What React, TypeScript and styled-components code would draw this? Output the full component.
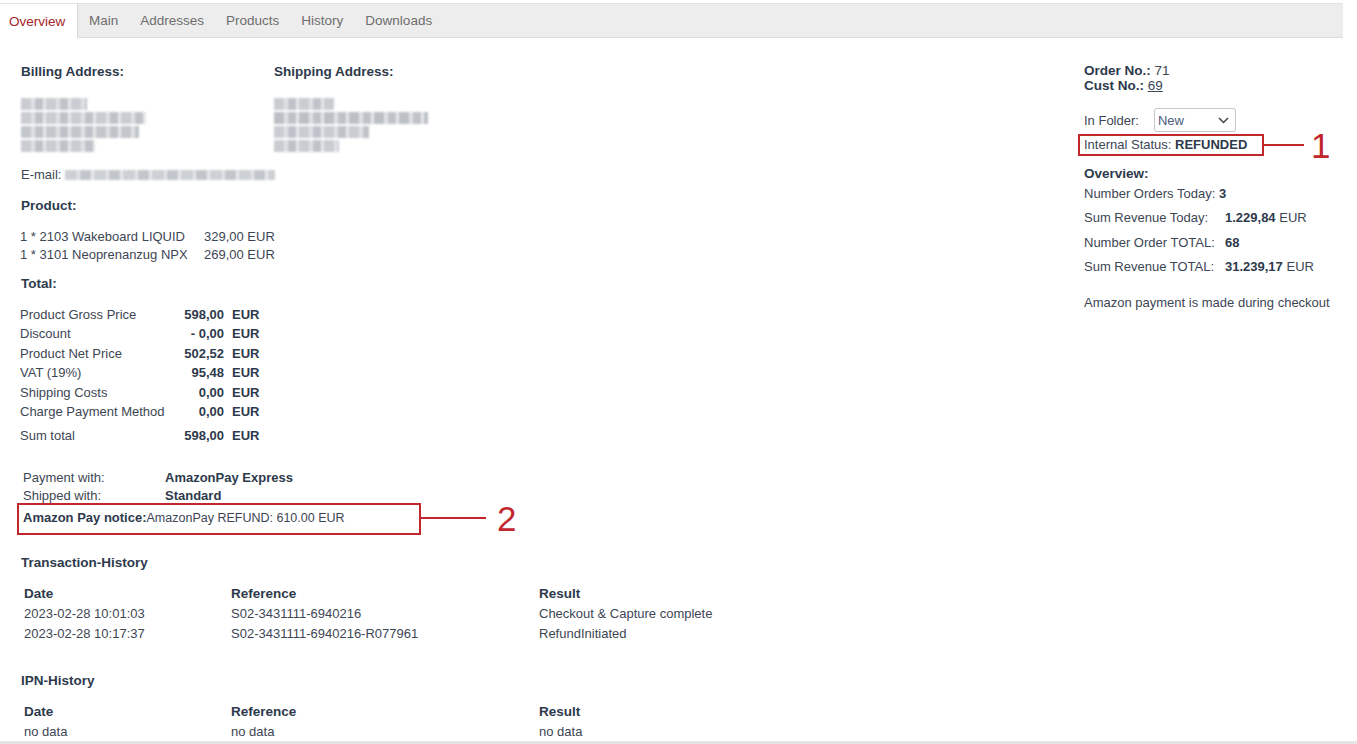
import React from "react";
import styled, { createGlobalStyle } from "styled-components";

const GlobalStyle = createGlobalStyle`
  html, body {
    margin: 0;
    padding: 0;
    background: #fff;
  }
  body {
    font-family: "Liberation Sans", Arial, sans-serif;
    font-size: 13px;
    color: #3d4654;
  }
`;

const Page = styled.div`
  position: relative;
  width: 1357px;
  height: 744px;
  overflow: hidden;
  border-bottom: 3px solid #e4e4e4;
  box-sizing: border-box;
`;

const TabBar = styled.div`
  margin-top: 3px;
  width: 1343px;
  height: 35px;
  display: flex;
  background: #ededed;
  border-top: 1px solid #e2e2e2;
  border-bottom: 1px solid #dcdcdc;
  box-sizing: border-box;
`;

const Tab = styled.div<{ $active?: boolean }>`
  padding: 0 11px 0 ${(p) => (p.$active ? "9px" : "11px")};
  display: flex;
  align-items: center;
  font-size: 13.5px;
  color: ${(p) => (p.$active ? "#a3262a" : "#6d6d6d")};
  background: ${(p) => (p.$active ? "#fff" : "transparent")};
  border-right: ${(p) => (p.$active ? "1px solid #d6d6d6" : "none")};
  margin-bottom: ${(p) => (p.$active ? "-1px" : "0")};
  ${(p) => (p.$active ? "width: 78px; box-sizing: border-box;" : "")}
`;

const Body = styled.div`
  display: flex;
  justify-content: space-between;
`;

const Left = styled.div`
  padding: 26px 0 0 21px;
  width: 800px;
`;

const Right = styled.div`
  padding: 25px 0 0 0;
  width: 273px;
`;

const Heading = styled.div<{ $mt?: number }>`
  font-weight: bold;
  color: #2e3a4c;
  font-size: 13.5px;
  margin-top: ${(p) => p.$mt ?? 0}px;
`;

const AddressRow = styled.div`
  display: flex;
`;

const AddressCol = styled.div<{ $w: number }>`
  width: ${(p) => p.$w}px;
`;

const Blur = styled.div`
  margin-top: 19px;
  display: flex;
  flex-direction: column;
  gap: 2px;
  filter: blur(1px);
`;

const BlurLine = styled.div<{ $w: number; $shade?: string }>`
  width: ${(p) => p.$w}px;
  height: 12px;
  background: repeating-linear-gradient(
    90deg,
    ${(p) => p.$shade ?? "#c9ccd1"} 0 10px,
    #dfe1e4 10px 14px,
    #bfc3c9 14px 22px,
    #e6e7ea 22px 25px
  );
`;

const EmailLine = styled.div`
  margin-top: 15px;
  display: flex;
  align-items: center;
  gap: 4px;
`;

const BlurInline = styled.span<{ $w: number }>`
  display: inline-block;
  width: ${(p) => p.$w}px;
  height: 10px;
  filter: blur(1px);
  background: repeating-linear-gradient(
    90deg,
    #cdd0d4 0 12px,
    #e4e5e8 12px 15px,
    #c2c6cb 15px 26px,
    #e8e9eb 26px 29px
  );
`;

const ProductGrid = styled.div`
  margin-top: 15px;
  display: grid;
  grid-template-columns: 184px auto;
  line-height: 18px;
  width: fit-content;
  margin-left: -1px;
`;

const TotalGrid = styled.div`
  margin-top: 15px;
  display: grid;
  grid-template-columns: 150px 54px auto;
  row-gap: 1.4px;
  width: fit-content;
  margin-left: -1px;
  line-height: 18px;
`;

const Value = styled.span<{ $last?: boolean }>`
  font-weight: bold;
  color: #2e3a4c;
  text-align: right;
  ${(p) => (p.$last ? "margin-top: 5px;" : "")}
`;

const Unit = styled.span<{ $last?: boolean }>`
  font-weight: bold;
  color: #2e3a4c;
  padding-left: 8px;
  ${(p) => (p.$last ? "margin-top: 5px;" : "")}
`;

const Label = styled.span<{ $last?: boolean }>`
  ${(p) => (p.$last ? "margin-top: 5px;" : "")}
`;

const PayGrid = styled.div`
  margin-top: 24px;
  display: grid;
  grid-template-columns: 142px auto;
  line-height: 18px;
  padding-left: 2px;
`;

const Notice = styled.div`
  margin-top: 4px;
  line-height: 18px;
  padding-left: 2px;
  font-size: 12.5px;
`;

const NoticeLabel = styled.span`
  font-weight: bold;
  color: #2e3a4c;
  font-size: 13px;
`;

const HistTable = styled.div`
  margin-top: 14px;
  display: grid;
  grid-template-columns: 207px 308px auto;
  line-height: 20px;
  padding-left: 3px;
  width: 740px;
`;

const HistHead = styled.span`
  font-weight: bold;
  color: #2e3a4c;
  font-size: 13.5px;
`;

const OrderInfo = styled.div`
  line-height: 15px;
  font-size: 13.5px;
`;

const Strong = styled.span`
  font-weight: bold;
  color: #2e3a4c;
`;

const Link = styled.a`
  color: #3d4654;
  text-decoration: underline;
`;

const FolderRow = styled.div`
  margin-top: 15px;
  display: flex;
  align-items: center;
  gap: 15px;
`;

const Select = styled.div`
  width: 82px;
  height: 24px;
  box-sizing: border-box;
  border: 1px solid #c8c8c8;
  border-radius: 3px;
  display: flex;
  align-items: center;
  justify-content: space-between;
  padding: 0 6px 0 3px;
  color: #4a5d7a;
`;

const StatusLine = styled.div`
  margin-top: 4px;
  line-height: 18px;
`;

const StatGrid = styled.div`
  margin-top: 4px;
  display: grid;
  grid-template-columns: 141px auto;
  row-gap: 6.3px;
  line-height: 18px;
`;

const FullRow = styled.span`
  grid-column: 1 / -1;
`;

const Note = styled.div`
  margin-top: 19px;
`;

/* annotation overlays */
const Marker = styled.div<{ $x: number; $y: number; $w: number; $h: number }>`
  position: absolute;
  left: ${(p) => p.$x}px;
  top: ${(p) => p.$y}px;
  width: ${(p) => p.$w}px;
  height: ${(p) => p.$h}px;
  border: 2px solid #c1272d;
  box-sizing: border-box;
`;

const Leader = styled.div<{ $x: number; $y: number; $w: number }>`
  position: absolute;
  left: ${(p) => p.$x}px;
  top: ${(p) => p.$y}px;
  width: ${(p) => p.$w}px;
  height: 2px;
  background: #c1272d;
`;

const Num = styled.div<{ $x: number; $y: number }>`
  position: absolute;
  left: ${(p) => p.$x}px;
  top: ${(p) => p.$y}px;
  font-size: 35px;
  line-height: 35px;
  color: #c1272d;
  font-family: "Liberation Sans", Arial, sans-serif;
`;

const totals = [
  ["Product Gross Price", "598,00"],
  ["Discount", "- 0,00"],
  ["Product Net Price", "502,52"],
  ["VAT (19%)", "95,48"],
  ["Shipping Costs", "0,00"],
  ["Charge Payment Method", "0,00"],
];

const App = () => {
  return (
    <Page>
      <GlobalStyle />
      <TabBar>
        <Tab $active>Overview</Tab>
        <Tab>Main</Tab>
        <Tab>Addresses</Tab>
        <Tab>Products</Tab>
        <Tab>History</Tab>
        <Tab>Downloads</Tab>
      </TabBar>
      <Body>
        <Left>
          <AddressRow>
            <AddressCol $w={253}>
              <Heading>Billing Address:</Heading>
              <Blur>
                <BlurLine $w={66} />
                <BlurLine $w={125} />
                <BlurLine $w={118} $shade="#c3c7cc" />
                <BlurLine $w={74} />
              </Blur>
            </AddressCol>
            <AddressCol $w={200}>
              <Heading>Shipping Address:</Heading>
              <Blur>
                <BlurLine $w={60} />
                <BlurLine $w={154} $shade="#bcc0c6" />
                <BlurLine $w={95} />
                <BlurLine $w={65} />
              </Blur>
            </AddressCol>
          </AddressRow>
          <EmailLine>
            E-mail: <BlurInline $w={210} />
          </EmailLine>

          <Heading $mt={16}>Product:</Heading>
          <ProductGrid>
            <span>1 * 2103 Wakeboard LIQUID</span>
            <span>329,00 EUR</span>
            <span>1 * 3101 Neoprenanzug NPX</span>
            <span>269,00 EUR</span>
          </ProductGrid>

          <Heading $mt={12}>Total:</Heading>
          <TotalGrid>
            {totals.map(([label, value]) => (
              <React.Fragment key={label}>
                <Label>{label}</Label>
                <Value>{value}</Value>
                <Unit>EUR</Unit>
              </React.Fragment>
            ))}
            <Label $last>Sum total</Label>
            <Value $last>598,00</Value>
            <Unit $last>EUR</Unit>
          </TotalGrid>

          <PayGrid>
            <span>Payment with:</span>
            <Strong>AmazonPay Express</Strong>
            <span>Shipped with:</span>
            <Strong>Standard</Strong>
          </PayGrid>
          <Notice>
            <NoticeLabel>Amazon Pay notice:</NoticeLabel>AmazonPay REFUND: 610.00 EUR
          </Notice>

          <Heading $mt={28}>Transaction-History</Heading>
          <HistTable>
            <HistHead>Date</HistHead>
            <HistHead>Reference</HistHead>
            <HistHead>Result</HistHead>
            <span>2023-02-28 10:01:03</span>
            <span>S02-3431111-6940216</span>
            <span>Checkout &amp; Capture complete</span>
            <span>2023-02-28 10:17:37</span>
            <span>S02-3431111-6940216-R077961</span>
            <span>RefundInitiated</span>
          </HistTable>

          <Heading $mt={29}>IPN-History</Heading>
          <HistTable>
            <HistHead>Date</HistHead>
            <HistHead>Reference</HistHead>
            <HistHead>Result</HistHead>
            <span>no data</span>
            <span>no data</span>
            <span>no data</span>
          </HistTable>
        </Left>

        <Right>
          <OrderInfo>
            <div>
              <Strong>Order No.:</Strong> 71
            </div>
            <div>
              <Strong>Cust No.:</Strong> <Link href="#">69</Link>
            </div>
          </OrderInfo>
          <FolderRow>
            <span>In Folder:</span>
            <Select>
              <span>New</span>
              <svg width="11" height="7" viewBox="0 0 11 7" fill="none">
                <path d="M1 1l4.5 4.5L10 1" stroke="#444" strokeWidth="1.5" />
              </svg>
            </Select>
          </FolderRow>
          <StatusLine>
            Internal Status: <Strong>REFUNDED</Strong>
          </StatusLine>
          <Heading $mt={12}>Overview:</Heading>
          <StatGrid>
            <FullRow>
              Number Orders Today: <Strong>3</Strong>
            </FullRow>
            <span>Sum Revenue Today:</span>
            <span>
              <Strong>1.229,84</Strong> EUR
            </span>
            <span>Number Order TOTAL:</span>
            <Strong>68</Strong>
            <span>Sum Revenue TOTAL:</span>
            <span>
              <Strong>31.239,17</Strong> EUR
            </span>
          </StatGrid>
          <Note>Amazon payment is made during checkout</Note>
        </Right>
      </Body>

      <Marker $x={1078} $y={134} $w={186} $h={22} />
      <Leader $x={1263} $y={144} $w={41} />
      <Num $x={1311} $y={128}>1</Num>

      <Marker $x={17} $y={503} $w={404} $h={32} />
      <Leader $x={420} $y={517} $w={66} />
      <Num $x={497} $y={501}>2</Num>
    </Page>
  );
};

export default App;
